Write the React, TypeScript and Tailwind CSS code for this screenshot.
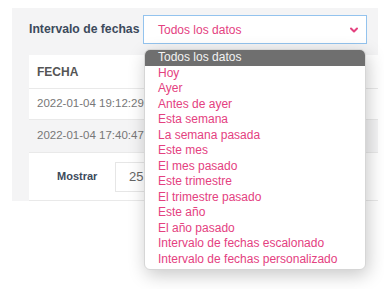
import React from "react";

const items = [
  "Todos los datos",
  "Hoy",
  "Ayer",
  "Antes de ayer",
  "Esta semana",
  "La semana pasada",
  "Este mes",
  "El mes pasado",
  "Este trimestre",
  "El trimestre pasado",
  "Este año",
  "El año pasado",
  "Intervalo de fechas escalonado",
  "Intervalo de fechas personalizado",
];

export default function App() {
  return (
    <div
      className="relative w-[384px] h-[289px] overflow-hidden bg-white pt-[8px] pl-[12px]"
      style={{ fontFamily: '"Liberation Sans", Arial, sans-serif' }}
    >
      <div className="w-[366px] h-[193px] bg-[#f4f4f5] pl-[17px] pt-[7px] flex flex-col">
        <div className="flex items-center h-[29px]">
          <span className="text-[12.2px] font-bold text-[#3c4a5c] w-[114px] leading-none">
            Intervalo de fechas
          </span>
          <div className="w-[224px] h-[29px] bg-white border border-[#93c3ee] flex items-center justify-between pl-[14px] pr-[7px]">
            <span className="text-[12px] text-[#e4417f] leading-none">Todos los datos</span>
            <svg width="10" height="8" viewBox="0 0 10 8">
              <polyline points="2,2.5 5,5.5 8,2.5" fill="none" stroke="#e4417f" strokeWidth="2" strokeLinecap="round" strokeLinejoin="round" />
            </svg>
          </div>
        </div>
        <div className="mt-[11px] bg-white flex flex-col flex-1">
          <div className="h-[34px] flex items-center pl-[8px] border-b border-[#e9e9e9]">
            <span className="text-[12px] font-bold text-[#555]">FECHA</span>
          </div>
          <div className="h-[31px] flex items-center pl-[8px] border-b border-[#e9e9e9]">
            <span className="text-[11.5px] text-[#777]">2022-01-04 19:12:29.000</span>
          </div>
          <div className="h-[33px] flex items-center pl-[8px] border-b border-[#e9e9e9] bg-[#f4f4f5]">
            <span className="text-[11.5px] text-[#777]">2022-01-04 17:40:47.000</span>
          </div>
          <div className="flex-1 flex items-center pl-[28px] border-b border-[#e9e9e9]">
            <span className="text-[11px] font-bold text-[#3c4a5c] w-[58px]">Mostrar</span>
            <div className="w-[60px] h-[30px] border border-[#e6e6e6] flex items-center pl-[13px]">
              <span className="text-[13px] text-[#666]">25</span>
            </div>
          </div>
        </div>
      </div>
      <div className="absolute left-[144px] top-[49px] w-[222px] bg-white rounded-[6px] border border-[#d6d6d6] shadow-[2px_5px_18px_rgba(0,0,0,0.22)] overflow-hidden pb-[2px]">
        {items.map((t, i) => (
          <div
            key={t}
            className={
              i === 0
                ? "h-[15.5px] leading-[15.5px] pl-[13px] text-[12px] bg-[#6f6f6f] text-[#f3f3f3]"
                : "h-[15.5px] leading-[15.5px] pl-[13px] text-[12px] text-[#e4417f]"
            }
          >
            {t}
          </div>
        ))}
      </div>
    </div>
  );
}
